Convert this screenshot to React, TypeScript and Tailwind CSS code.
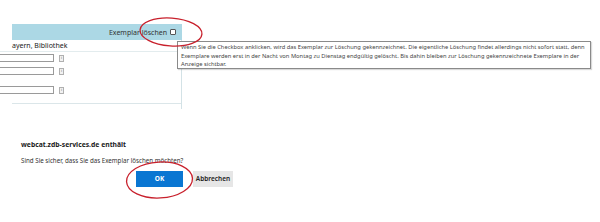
export default function App() {
  const inputRow = (mt: string) => (
    <div className={`flex items-center ${mt}`}>
      <div className="w-[54px] h-[8px] border border-l-0 border-[#9a9a9a] bg-white" />
      <div className="ml-[5px] w-[5px] h-[7px] border border-[#b0b0b0] bg-[#f2f2f2] flex items-center justify-center text-[4px] leading-none text-[#666]">i</div>
    </div>
  );
  return (
    <div className="relative w-[600px] h-[222px] bg-white overflow-hidden font-['Noto_Sans','Open_Sans',sans-serif] text-[#333]">
      {/* top table panel */}
      <div className="pt-[24px] w-[182px]">
        <div className="ml-[12px] h-[16px] bg-[#acd8e5] flex items-center justify-end pr-[6px] gap-[3px] text-[7px] leading-none text-[#333]">
          <span>Exemplar löschen</span>
          <span className="w-[6px] h-[6px] border border-[#555] rounded-[1px] bg-white" />
        </div>
        <div className="h-[69px] border-r border-[#d3e2e6] flex flex-col">
          <div className="h-[12px] pl-[12px] flex items-center text-[7px] leading-none text-[#222] border-b border-[#e3ecee]">
            ayern, Bibliothek
          </div>
          {inputRow("mt-[2px]")}
          {inputRow("mt-[5px]")}
          {inputRow("mt-[11px]")}
          <div className="mt-[9px] ml-[12px] border-b border-[#dbe6e9]" />
        </div>
      </div>

      {/* dialog */}
      <div className="mt-[31px] w-[240px] pl-[21px] pr-[7px]">
        <div className="text-[6.8px] leading-[9px] font-bold text-[#222]">webcat.zdb-services.de enthält</div>
        <div className="mt-[7px] text-[6.2px] leading-[9px] text-[#333]">Sind Sie sicher, dass Sie das Exemplar löschen möchten?</div>
        <div className="mt-[6px] flex justify-end gap-[10px]">
          <div className="w-[47px] h-[16px] bg-[#0a76d2] text-white text-[6.5px] font-bold flex items-center justify-center">OK</div>
          <div className="w-[40px] h-[16px] bg-[#e6e6e6] text-[#222] text-[6.5px] font-semibold flex items-center justify-center">Abbrechen</div>
        </div>
      </div>

      {/* tooltip */}
      <div className="absolute left-[177px] top-[41px] w-[414px] h-[28px] border border-[#8a8a8a] bg-white shadow-[1px_1px_1px_rgba(0,0,0,0.15)] px-[3px] pt-[1px] text-[5.75px] leading-[8.5px] text-[#444]">
        Wenn Sie die Checkbox anklicken, wird das Exemplar zur Löschung gekennzeichnet. Die eigentliche Löschung findet allerdings nicht sofort statt, denn Exemplare werden erst in der Nacht von Montag zu Dienstag endgültig gelöscht. Bis dahin bleiben zur Löschung gekennzeichnete Exemplare in der Anzeige sichtbar.
      </div>

      {/* red ellipses */}
      <svg className="absolute left-0 top-0 pointer-events-none" width="600" height="222">
        <ellipse cx="171" cy="32" rx="31" ry="14" fill="none" stroke="#c8202c" strokeWidth="1.3" transform="rotate(4 171 32)" />
        <ellipse cx="159.5" cy="180" rx="33" ry="18" fill="none" stroke="#c8202c" strokeWidth="1.3" transform="rotate(-3 159.5 180)" />
      </svg>
    </div>
  );
}
